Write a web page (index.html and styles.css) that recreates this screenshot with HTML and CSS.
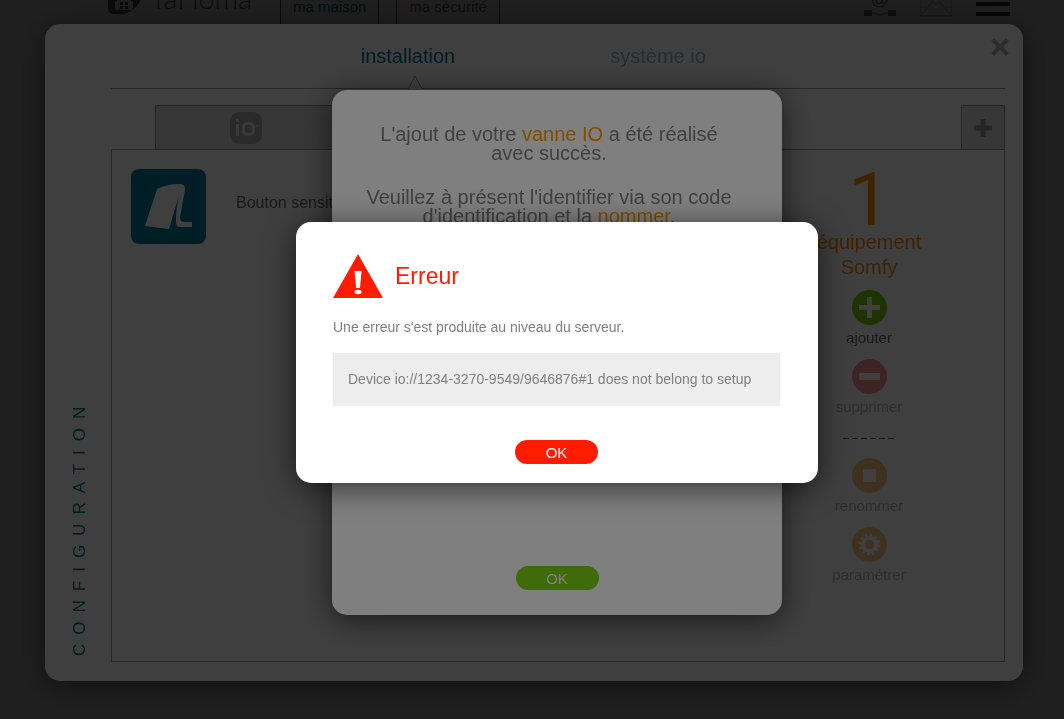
FILE: index.html
```html
<!DOCTYPE html>
<html lang="fr">
<head>
  <meta charset="UTF-8" />
  <title>TaHoma - Configuration</title>
  <link rel="stylesheet" href="styles.css">
</head>
<body>
  <header class="header">
    <a href="#" class="logo">
      <svg width="34" height="40" viewBox="0 0 34 40">
        <path d="M0 6h24q9 0 9 9v7q0 7-6 12t-12 6H6q-6 0-6-6z" fill="#555"/>
        <path d="M7 28l9-7 9 7v6q0 2-2 2H9q-2 0-2-2z" fill="#eee"/>
        <path d="M12 28h3v3h-3zM17 28h3v3h-3zM12 32h3v3h-3zM17 32h3v3h-3z" fill="#555"/>
      </svg>
      <span>TaHoma</span>
    </a>
    <nav class="main-nav">
      <a href="#" class="active">ma maison</a>
      <a href="#">ma sécurité</a>
    </nav>
    <div class="tools">
      <button aria-label="réseau">
        <svg width="32" height="32" viewBox="0 0 32 32">
          <text x="16" y="20" text-anchor="middle" class="arobase">@</text>
          <path d="M0 25h8v6H0zM24 25h8v6h-8z" fill="#777"/>
          <path d="M8 28h4l1 2h6l1-2h4" fill="none" stroke="#999"/>
        </svg>
      </button>
      <button aria-label="messages">
        <svg width="32" height="32" viewBox="0 0 32 32">
          <path d="M1 6h30v25H1zM1 6l15 14L31 6M1 31l11-14M31 31L20 17" fill="none" stroke="#aaa"/>
        </svg>
      </button>
      <button aria-label="menu">
        <svg width="34" height="32" viewBox="0 0 34 32">
          <path d="M0 9h34M0 19h34M0 29h34" stroke="#444" stroke-width="4"/>
        </svg>
      </button>
    </div>
  </header>

  <!-- Configuration -->
  <div class="overlay overlay-panel">
    <main class="panel">
      <button class="close" aria-label="fermer">
        <svg width="18" height="18" viewBox="0 0 18 18">
          <path d="M1.500 1.500l15 15M16.500 1.500l-15 15" stroke="#b4b4b4" stroke-width="4"/>
        </svg>
      </button>
      <h1 class="side-title">CONFIGURATION</h1>
      <div class="content">
        <nav class="tabs">
          <a href="#" class="current">installation
            <svg class="pointer" width="16" height="14" viewBox="0 0 16 14">
              <path d="M1 14L8 1l7 13" fill="#fff" stroke="#8aa" />
            </svg>
          </a>
          <a href="#">système io</a>
        </nav>

        <div class="sub-tabs">
          <button class="io" aria-label="io">
            <svg width="32" height="32" viewBox="0 0 32 32">
              <rect width="32" height="32" rx="9" fill="#aaa"/>
              <path d="M7.500 12v12M7.500 7v3" stroke="#e6e6e6" stroke-width="3"/>
              <rect x="13.500" y="11.500" width="10" height="11" rx="4" fill="none" stroke="#e6e6e6" stroke-width="3"/>
              <path d="M26 14h3" stroke="#e6e6e6"/>
            </svg>
          </button>
          <button class="plus" aria-label="nouveau">
            <svg width="18" height="18" viewBox="0 0 18 18">
              <path d="M9 0v18M0 9h18" stroke="#999" stroke-width="5"/>
            </svg>
          </button>
        </div>

        <div class="box">
          <div class="device">
            <svg width="75" height="75" viewBox="0 0 75 75">
              <rect width="75" height="75" rx="8" fill="#007a9a"/>
              <path d="M14 57L26 20Q36 15 49 15Q55 15 54 21L49 48Q49 53 53 53H61V58H49Q45 58 45 53Q45 36 49 23L38 60Z" fill="#fff"/>
            </svg>
            <span>Bouton sensitif</span>
          </div>

          <aside class="actions">
            <div class="count">1</div>
            <div class="count-label">équipement<br>Somfy</div>
            <button class="action">
              <svg width="35" height="35" viewBox="0 0 35 35">
                <circle cx="17.500" cy="17.500" r="17.500" fill="#78cc00"/>
                <path d="M17.500 7v21M7 17.500h21" stroke="#fff" stroke-width="5"/>
              </svg>
              ajouter
            </button>
            <button class="action" disabled>
              <svg width="35" height="35" viewBox="0 0 35 35">
                <circle cx="17.500" cy="17.500" r="17.500" fill="#ee2222"/>
                <path d="M7 17.500h21" stroke="#fff" stroke-width="7"/>
              </svg>
              supprimer
            </button>
            <hr class="dashes">
            <button class="action" disabled>
              <svg width="35" height="35" viewBox="0 0 35 35">
                <circle cx="17.500" cy="17.500" r="17.500" fill="#ff8c00"/>
                <path d="M11 11h13v13H11z" fill="#fff"/>
              </svg>
              renommer
            </button>
            <button class="action" disabled>
              <svg width="35" height="35" viewBox="0 0 35 35">
                <circle cx="17.500" cy="17.500" r="17.500" fill="#ff8c00"/>
                <circle cx="17.500" cy="17.500" r="6.500" fill="none" stroke="#fff" stroke-width="4"/>
                <circle cx="17.500" cy="17.500" r="9.500" fill="none" stroke="#fff" stroke-width="3" stroke-dasharray="2.500 2.474"/>
              </svg>
              paramétrer
            </button>
          </aside>
        </div>
      </div>
    </main>
  </div>

  <!-- Ajout de l'équipement -->
  <div class="overlay overlay-dialog">
    <div class="dialog success" role="dialog">
      <div class="message">
        <p>L'ajout de votre <em>vanne IO</em> a été réalisé avec succès.</p>
        <p>Veuillez à présent l'identifier via son code d'identification et la <em>nommer</em>.</p>
      </div>
      <button class="ok">OK</button>
    </div>
  </div>

  <!-- Erreur -->
  <div class="overlay overlay-dialog">
    <div class="dialog error" role="alertdialog">
      <div class="error-title">
        <svg width="50" height="44" viewBox="0 0 50 44">
          <path d="M25 0l25 44H0z" fill="#ff1c00"/>
          <path d="M21.500 17h7l-1.500 17h-4z" fill="#fff"/>
          <ellipse cx="25" cy="38" rx="3.500" ry="2.200" fill="#fff"/>
        </svg>
        <h2>Erreur</h2>
      </div>
      <p>Une erreur s'est produite au niveau du serveur.</p>
      <div class="details">Device io://1234-3270-9549/9646876#1 does not belong to setup</div>
      <button class="ok">OK</button>
    </div>
  </div>
</body>
</html>
```
FILE: styles.css
```css
* {
  box-sizing: border-box;
}

body {
  margin: 0;
  height: 100vh;
  overflow: hidden;
  background: #fff;
  color: #666;
  font-family: "Liberation Sans", Arial, sans-serif;
  font-size: 15px;
}

a {
  color: inherit;
  text-decoration: none;
}

button {
  padding: 0;
  border: none;
  background: none;
  color: inherit;
  font: inherit;
  cursor: pointer;
}

svg {
  display: block;
}

/* header */
.header {
  display: flex;
  align-items: flex-start;
  height: 76px;
  margin-top: -26px;
  padding: 0 54px 0 108px;
}

.logo {
  display: flex;
  width: 172px;
  gap: 8px;
  color: #666;
  font-family: Lato, sans-serif;
  font-size: 29px;
  font-weight: 300;
  line-height: 48px;
}

.main-nav {
  display: flex;
  gap: 17px;
  height: 76px;
}

.main-nav a {
  padding: 0 12px;
  border: 1px solid #555;
  line-height: 64px;
}

.main-nav .active {
  color: #006a84;
}

.tools {
  display: flex;
  gap: 24px;
  margin-left: auto;
  padding-top: 11px;
}

.arobase {
  fill: #8c8c00;
  font-size: 18px;
}

/* overlays */
.overlay {
  position: fixed;
  inset: 0;
  display: flex;
  background: rgba(0, 0, 0, 0.5);
}

.overlay-panel {
  padding: 24px 41px 38px 45px;
}

.overlay-dialog {
  align-items: center;
  justify-content: center;
  padding: 0 0 14px 50px;
}

/* configuration */
.panel {
  position: relative;
  display: flex;
  flex: 1;
  padding: 0 18px 19px 0;
  border-radius: 15px;
  background: #fff;
  box-shadow: 0 5px 30px rgba(0, 0, 0, 0.5);
}

.close {
  position: absolute;
  top: 14px;
  right: 14px;
}

.side-title {
  width: 70px;
  margin: 0 -4px 0 0;
  padding: 6px 0 0;
  color: #007088;
  font-size: 17px;
  font-weight: normal;
  letter-spacing: 9px;
  line-height: 70px;
  writing-mode: vertical-rl;
  transform: rotate(180deg);
}

.content {
  display: flex;
  flex: 1;
  flex-direction: column;
}

.tabs {
  display: flex;
  justify-content: center;
  height: 65px;
  padding-right: 50px;
  border-bottom: 1px solid #7aa8a8;
  color: #8fb8bc;
  font-size: 20px;
  line-height: 64px;
  text-align: center;
}

.tabs a {
  position: relative;
  width: 250px;
}

.tabs .current {
  color: #007088;
}

.pointer {
  position: absolute;
  right: 110px;
  bottom: -1px;
}

.sub-tabs {
  display: flex;
  justify-content: space-between;
  height: 44px;
  margin-top: 16px;
  padding-left: 44px;
}

.sub-tabs button {
  display: flex;
  align-items: center;
  justify-content: center;
  border: 1px solid #999;
  border-bottom: none;
  background: #dcdcdc;
}

.io {
  width: 182px;
}

.plus {
  width: 44px;
}

.box {
  display: flex;
  flex: 1;
  justify-content: space-between;
  padding: 19px 75px 0 19px;
  border: 1px solid #999;
}

.device {
  display: flex;
  gap: 30px;
  height: 75px;
  font-size: 16px;
  line-height: 67px;
}

.actions {
  width: 120px;
  text-align: center;
}

.count {
  color: #ff8c00;
  font-family: Roboto, sans-serif;
  font-size: 74px;
  line-height: 61px;
}

.count-label {
  margin-bottom: 10px;
  color: #ff8c00;
  font-size: 20px;
  line-height: 25px;
}

.action {
  display: block;
  width: 100%;
  height: 59px;
  margin-bottom: 10px;
  line-height: 26px;
}

.action svg {
  margin: 0 auto;
}

.action:disabled {
  opacity: 0.5;
}

.dashes {
  width: 52px;
  height: 1px;
  margin: 20px auto 19px;
  border: none;
  background: repeating-linear-gradient(90deg, #555 0, #555 6px, transparent 6px, transparent 9px);
}

/* dialogs */
.dialog {
  display: flex;
  flex-direction: column;
  border-radius: 15px;
  background: #fff;
  box-shadow: 0 5px 30px rgba(0, 0, 0, 0.6);
}

.dialog p {
  margin: 0;
}

.ok {
  align-self: center;
  width: 83px;
  height: 24px;
  margin-top: auto;
  border-radius: 12px;
  color: #fff;
  font-size: 15px;
}

.success {
  width: 450px;
  height: 525px;
  padding: 35px 0 25px;
}

.message {
  display: flex;
  flex-direction: column;
  gap: 25px;
  padding: 0 46px 0 30px;
  color: #808080;
  font-size: 20px;
  line-height: 19px;
  text-align: center;
}

.message em {
  color: #ff9a00;
  font-style: normal;
}

.success .ok {
  background: #7ed614;
}

.error {
  width: 522px;
  min-height: 261px;
  padding: 32px 38px 19px 37px;
  color: #808080;
  font-size: 14px;
}

.error-title {
  display: flex;
  gap: 12px;
  margin-bottom: 20px;
}

.error h2 {
  margin: 0;
  color: #ff1c00;
  font-size: 23px;
  font-weight: normal;
  line-height: 44px;
}

.error p {
  line-height: 18px;
}

.details {
  margin: 17px 0 34px;
  padding: 15px;
  background: #ededed;
  line-height: 23px;
}

.error .ok {
  background: #ff1c00;
}
```
